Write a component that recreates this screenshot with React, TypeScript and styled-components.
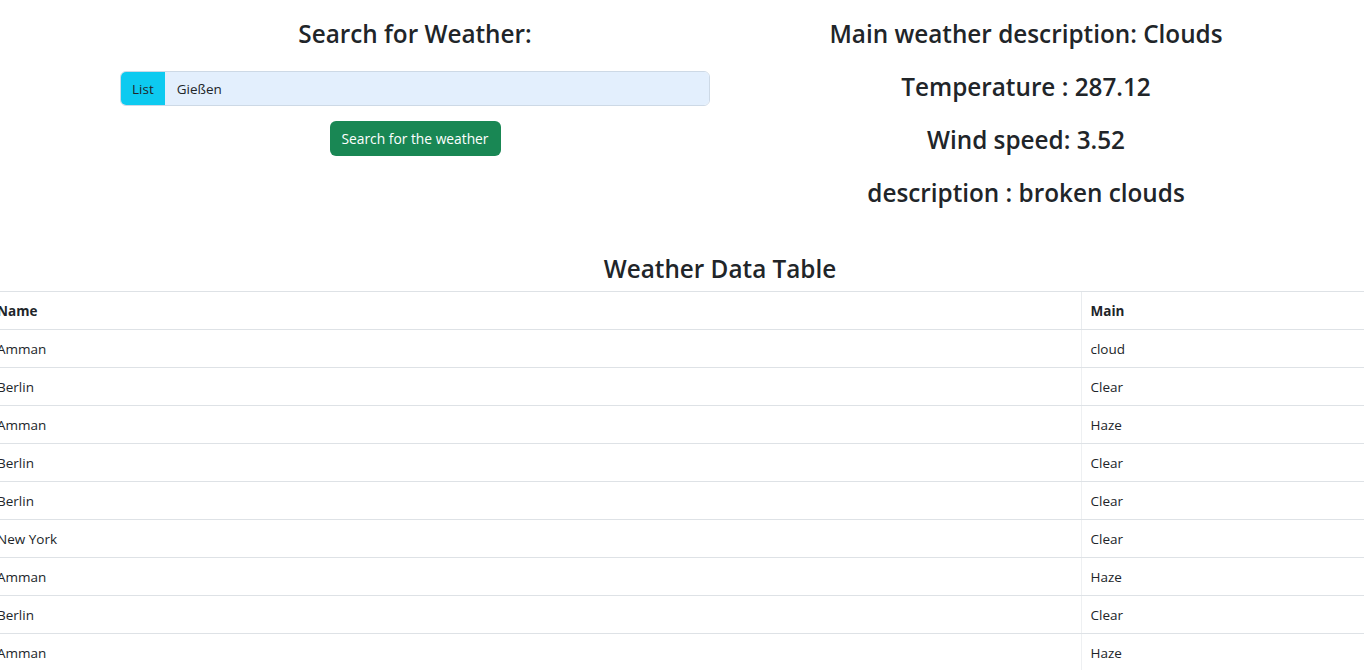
import React from "react";
import styled, { createGlobalStyle } from "styled-components";

const Global = createGlobalStyle`
  html, body { margin: 0; padding: 0; background: #fff; overflow: hidden; }
  body { font-family: "Open Sans", "Noto Sans", sans-serif; color: #212529; font-size: 14px; }
  * { box-sizing: border-box; }
`;

const Page = styled.div`
  width: 1364px;
  height: 670px;
  overflow: hidden;
`;

const Top = styled.div`
  display: flex;
  padding-top: 18px;
`;

const LeftCol = styled.div`
  width: 590px;
  margin-left: 120px;
  display: flex;
  flex-direction: column;
  align-items: center;
`;

const RightCol = styled.div`
  flex: 1;
  margin-right: 22px;
  display: flex;
  flex-direction: column;
  align-items: center;
`;

const Heading = styled.h3`
  margin: 0;
  font-size: 24.3px;
  font-weight: 600;
  line-height: 32px;
  color: #212529;
  white-space: nowrap;
`;

const InputGroup = styled.div`
  display: flex;
  width: 100%;
  height: 35px;
  margin-top: 21px;
  border-radius: 6px;
  overflow: hidden;
  border: 1px solid #cdd9e6;
`;

const Addon = styled.span`
  display: flex;
  align-items: center;
  padding: 0 11px;
  background: #0dcaf0;
  color: #212529;
  font-size: 13.5px;
`;

const Field = styled.div`
  flex: 1;
  display: flex;
  align-items: center;
  padding: 0 12px;
  background: #e3effd;
  font-size: 13.5px;
  color: #212529;
`;

const Button = styled.button`
  margin-top: 15px;
  height: 35px;
  width: 171px;
  border: none;
  border-radius: 6px;
  background: #198754;
  color: #fff;
  font-family: inherit;
  font-size: 13.8px;
  padding: 0;
`;

const InfoLine = styled(Heading)`
  margin-bottom: 21px;
`;

const TableTitle = styled.h3`
  margin: 17px 0 0;
  text-align: center;
  font-size: 24.3px;
  font-weight: 600;
  line-height: 44px;
  padding-left: 76px;
`;

const Table = styled.table`
  border-collapse: collapse;
  margin-left: -12px;
  width: 1400px;
  font-size: 13.5px;
`;

const Th = styled.th<{ $w?: number }>`
  text-align: left;
  font-weight: 700;
  height: 38px;
  padding: 0 9px;
  border-top: 1px solid #dee2e6;
  border-bottom: 1px solid #dee2e6;
  ${(p) => (p.$w ? `width: ${p.$w}px;` : "")}
  & + & { border-left: 1px solid #e9ecef; }
`;

const Td = styled.td`
  height: 38px;
  padding: 0 9px;
  border-bottom: 1px solid #dee2e6;
  color: #212529;
  & + & { border-left: 1px solid #eef0f2; }
`;

const rows: [string, string][] = [
  ["Amman", "cloud"],
  ["Berlin", "Clear"],
  ["Amman", "Haze"],
  ["Berlin", "Clear"],
  ["Berlin", "Clear"],
  ["New York", "Clear"],
  ["Amman", "Haze"],
  ["Berlin", "Clear"],
  ["Amman", "Haze"],
  ["Berlin", "Clear"],
];

export default function App() {
  return (
    <Page>
      <Global />
      <Top>
        <LeftCol>
          <Heading>Search for Weather:</Heading>
          <InputGroup>
            <Addon>List</Addon>
            <Field>Gießen</Field>
          </InputGroup>
          <Button>Search for the weather</Button>
        </LeftCol>
        <RightCol>
          <InfoLine>Main weather description: Clouds</InfoLine>
          <InfoLine>Temperature : 287.12</InfoLine>
          <InfoLine>Wind speed: 3.52</InfoLine>
          <InfoLine>description : broken clouds</InfoLine>
        </RightCol>
      </Top>
      <TableTitle>Weather Data Table</TableTitle>
      <Table>
        <thead>
          <tr>
            <Th $w={1093}>Name</Th>
            <Th>Main</Th>
          </tr>
        </thead>
        <tbody>
          {rows.map((r, i) => (
            <tr key={i}>
              <Td>{r[0]}</Td>
              <Td>{r[1]}</Td>
            </tr>
          ))}
        </tbody>
      </Table>
    </Page>
  );
}
